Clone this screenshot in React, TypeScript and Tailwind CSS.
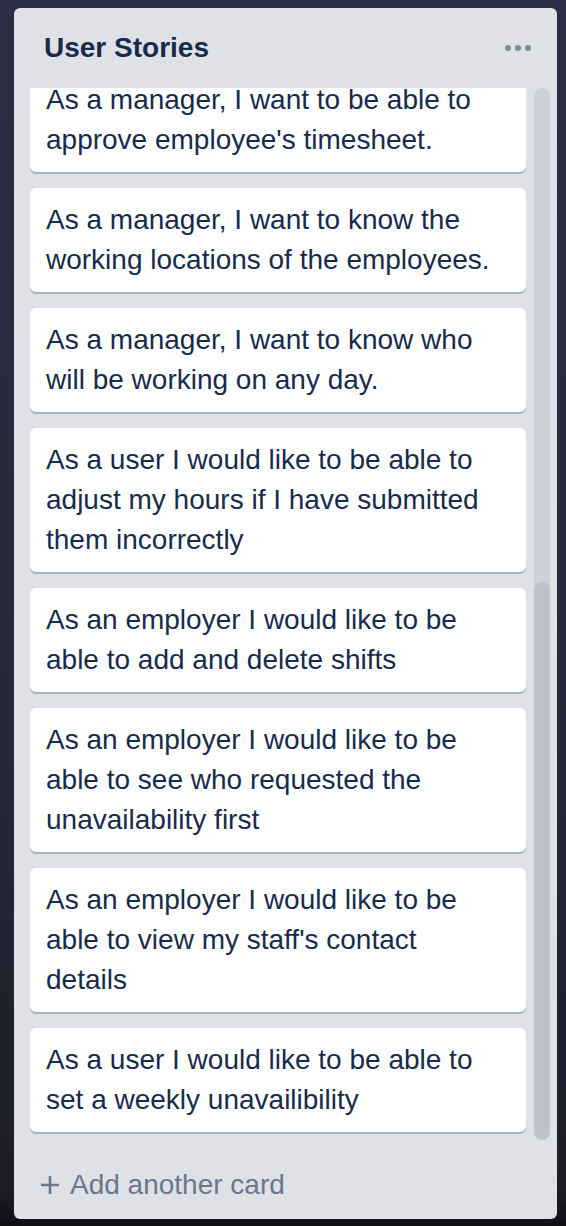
import React from 'react';

const stories = [
  "As a manager, I want to be able to approve employee's timesheet.",
  'As a manager, I want to know the working locations of the employees.',
  'As a manager, I want to know who will be working on any day.',
  'As a user I would like to be able to adjust my hours if I have submitted them incorrectly',
  'As an employer I would like to be able to add and delete shifts',
  'As an employer I would like to be able to see who requested the unavailability first',
  "As an employer I would like to be able to view my staff's contact details",
  'As a user I would like to be able to set a weekly unavailibility',
];

function StoryCard({ text }: { text: string }) {
  return (
    <div className="bg-white rounded-[6px] shadow-[0_2px_0_rgba(9,30,66,0.25)] pl-[16px] pr-[28px] py-[12px] text-[28px] leading-[40px] text-[#172b4d]">
      {text}
    </div>
  );
}

export default function App() {
  return (
    <div
      className="w-[566px] h-[1226px] overflow-hidden bg-[linear-gradient(180deg,#2b2d44_0%,#26283a_60%,#1c1d28_97%,#0f0f12_100%)] pt-[8px] pl-[14px]"
      style={{ fontFamily: '"Liberation Sans", Arial, sans-serif' }}
    >
      <div className="w-[543px] h-[1211px] bg-[#dfe1e6] rounded-[6px] flex flex-col">
        {/* List header */}
        <div className="h-[80px] flex items-center justify-between pl-[30px] pr-[26px] pb-[1px]">
          <h2 className="text-[28px] font-bold text-[#172b4d] leading-none">User Stories</h2>
          <div className="flex gap-[4px]">
            <span className="w-[6px] h-[6px] rounded-full bg-[#798d99]" />
            <span className="w-[6px] h-[6px] rounded-full bg-[#798d99]" />
            <span className="w-[6px] h-[6px] rounded-full bg-[#798d99]" />
          </div>
        </div>

        {/* Cards + scrollbar */}
        <div className="h-[1052px] flex pl-[16px] pr-[7px] gap-[8px]">
          <div className="w-[496px] overflow-hidden">
            <div className="-mt-[20px] flex flex-col gap-[16px]">
              {stories.map((s) => (
                <StoryCard key={s} text={s} />
              ))}
            </div>
          </div>
          <div className="w-[16px] h-full rounded-full bg-[#cdd2d9] flex flex-col justify-end">
            <div className="h-[558px] rounded-full bg-[#bcc3cc]" />
          </div>
        </div>

        {/* Footer */}
        <div className="flex items-center pl-[26px] pt-[25px] text-[28px] leading-[40px] text-[#6b778c]">
          <svg width="20" height="20" viewBox="0 0 20 20" className="mr-[10px]">
            <path d="M10 1v18M1 10h18" stroke="#6b778c" strokeWidth="2.6" />
          </svg>
          <span>Add another card</span>
        </div>
      </div>
    </div>
  );
}
